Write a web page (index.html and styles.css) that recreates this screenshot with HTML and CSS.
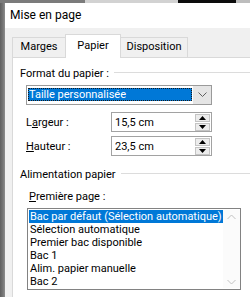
FILE: index.html
```html
<!DOCTYPE html>
<html lang="fr">
<head>
  <meta charset="UTF-8">
  <title>Mise en page</title>
  <link rel="stylesheet" href="styles.css">
</head>
<body>
  <div class="backdrop">
    <span class="seg seg-dark"></span>
    <span class="seg seg-light"></span>
    <span class="seg seg-black"></span>
    <span class="seg seg-mid"></span>
  </div>

  <div class="desk">
    <div class="edge"></div>

    <div class="window">
      <div class="titlebar">Mise en page</div>

      <div class="client">
        <div class="tabs">
          <div class="tab tab-marges">Marges</div>
          <div class="tab tab-papier active">Papier</div>
          <div class="tab tab-dispo">Disposition</div>
        </div>

        <div class="panel">
          <div class="group-title">Format du papier :</div>

          <div class="combo">
            <div class="combo-value"><span>Taille personnalisée</span></div>
            <div class="combo-arrow">
              <svg width="9" height="6" viewBox="0 0 9 6"><path d="M0.5 0.5 L4.5 4.5 L8.5 0.5" fill="none" stroke="#606060" stroke-width="1"/></svg>
            </div>
          </div>

          <div class="field field-first">
            <label class="field-label">L<u>a</u>rgeur :</label>
            <div class="spin">
              <span class="spin-value">15,5 cm</span>
              <div class="spin-buttons">
                <div class="spin-btn"><svg width="7" height="4" viewBox="0 0 7 4"><path d="M3.5 0 L7 4 L0 4 Z" fill="#000"/></svg></div>
                <div class="spin-btn"><svg width="7" height="4" viewBox="0 0 7 4"><path d="M0 0 L7 0 L3.5 4 Z" fill="#000"/></svg></div>
              </div>
            </div>
          </div>

          <div class="field">
            <label class="field-label"><u>H</u>auteur :</label>
            <div class="spin">
              <span class="spin-value">23,5 cm</span>
              <div class="spin-buttons">
                <div class="spin-btn"><svg width="7" height="4" viewBox="0 0 7 4"><path d="M3.5 0 L7 4 L0 4 Z" fill="#000"/></svg></div>
                <div class="spin-btn"><svg width="7" height="4" viewBox="0 0 7 4"><path d="M0 0 L7 0 L3.5 4 Z" fill="#000"/></svg></div>
              </div>
            </div>
          </div>

          <div class="group-title group-feed">Alimentation papier</div>

          <div class="sub-label"><u>P</u>remière page :</div>

          <div class="listbox">
            <ul class="items">
              <li class="item selected">Bac par défaut (Sélection automatique)</li>
              <li class="item">Sélection automatique</li>
              <li class="item">Premier bac disponible</li>
              <li class="item">Bac 1</li>
              <li class="item">Alim. papier manuelle</li>
              <li class="item">Bac 2</li>
            </ul>
            <div class="scrollbar">
              <svg width="9" height="6" viewBox="0 0 9 6"><path d="M0.5 5 L4.5 1 L8.5 5" fill="none" stroke="#c2c2c2" stroke-width="1"/></svg>
              <svg width="9" height="6" viewBox="0 0 9 6"><path d="M0.5 1 L4.5 5 L8.5 1" fill="none" stroke="#c2c2c2" stroke-width="1"/></svg>
            </div>
          </div>
        </div>
      </div>
    </div>
  </div>
</body>
</html>
```

FILE: styles.css
```css
html, body {
  margin: 0;
  width: 250px;
  height: 297px;
  overflow: hidden;
}

body {
  font-family: Roboto, 'Noto Sans', sans-serif;
  font-size: 11px;
  color: #000;
  background: #7a7a7a;
  display: flex;
  flex-direction: column;
}

/* bits of the desktop behind the dialog */
.backdrop {
  display: flex;
  height: 3px;
  flex-shrink: 0;
}

.seg {
  display: block;
  height: 100%;
}

.seg-dark { width: 85px; background: #7b7b7b; }
.seg-light { width: 93px; background: #d2d2d2; }
.seg-black { width: 58px; background: #0c0c0c; }
.seg-mid { flex: 1; background: #bdbdbd; }

.desk {
  flex: 1;
  display: flex;
  min-height: 0;
}

.edge {
  width: 5px;
  flex-shrink: 0;
  background: linear-gradient(to right, #5f5f5f, #767676 60%, #8e8e8e);
}

.window {
  flex: 1;
  display: flex;
  flex-direction: column;
  min-width: 0;
}

.titlebar {
  height: 25px;
  line-height: 25px;
  padding-left: 5px;
  background: #fff;
  font-size: 12px;
  flex-shrink: 0;
}

.client {
  flex: 1;
  display: flex;
  flex-direction: column;
  background: #f0f0f0;
  padding: 6px 0 0 7px;
  min-height: 0;
}

/* tabs */
.tabs {
  display: flex;
  align-items: flex-end;
  height: 23px;
  flex-shrink: 0;
}

.tab {
  box-sizing: border-box;
  height: 20px;
  line-height: 18px;
  text-align: center;
  border: 1px solid #d9d9d9;
  border-bottom: none;
  background: #f0f0f0;
}

.tab-marges { width: 53px; border-right: none; }
.tab-papier { width: 56px; }
.tab-dispo { width: 67px; border-left: none; }

.tab.active {
  height: 24px;
  line-height: 21px;
  background: #fff;
  margin-bottom: -1px;
  position: relative;
  z-index: 1;
}

/* tab page */
.panel {
  flex: 1;
  background: #fff;
  border-top: 1px solid #d9d9d9;
  border-left: 1px solid #d9d9d9;
  padding: 9px 0 0 7px;
}

.group-title {
  display: flex;
  align-items: center;
  height: 14px;
  line-height: 14px;
  white-space: nowrap;
}

.group-title::after {
  content: "";
  flex: 1;
  height: 1px;
  margin: -3px 0 0 5px;
  background: #dcdcdc;
}

.combo {
  display: flex;
  box-sizing: border-box;
  width: 186px;
  height: 20px;
  margin: 4px 0 0 6px;
  border: 1px solid #9a9a9a;
  background: #fff;
}

.combo-value {
  flex: 1;
  margin: 2px 1px 3px 1px;
  background: #0078d7;
  outline: 1px dotted #1a1a1a;
  outline-offset: -1px;
  color: #fff;
  line-height: 13px;
  padding-left: 1px;
}

.combo-arrow {
  width: 18px;
  background: #e5e5e5;
  display: flex;
  align-items: center;
  justify-content: center;
}

.field {
  display: flex;
  align-items: center;
  margin: 4px 0 0 6px;
}

.field-first {
  margin-top: 7px;
}

.field-label {
  width: 85px;
}

.spin {
  box-sizing: border-box;
  width: 101px;
  height: 20px;
  border: 1px solid #a2a2a2;
  display: flex;
  align-items: center;
  padding-left: 3px;
}

.spin-value {
  flex: 1;
}

.spin-buttons {
  display: flex;
  flex-direction: column;
  gap: 1px;
  margin-right: 1px;
}

.spin-btn {
  box-sizing: border-box;
  width: 15px;
  height: 8px;
  border: 1px solid #c4c4c4;
  background: #ececec;
  display: flex;
  align-items: center;
  justify-content: center;
}

.group-feed {
  margin-top: 12px;
}

.sub-label {
  height: 14px;
  line-height: 14px;
  margin: 8px 0 0 9px;
}

.listbox {
  box-sizing: border-box;
  width: 214px;
  margin: 4px 0 0 7px;
  border: 1px solid #828282;
  display: flex;
  padding: 1px 0 1px 1px;
}

.items {
  flex: 1;
  list-style: none;
  margin: 0;
  padding: 0;
}

.item {
  height: 13px;
  line-height: 13px;
  padding-left: 1px;
  white-space: nowrap;
}

.item.selected {
  background: #0078d7;
  color: #fff;
}

.scrollbar {
  width: 17px;
  display: flex;
  flex-direction: column;
  justify-content: space-between;
  align-items: center;
  padding: 4px 0 3px;
  background: #fbfbfb;
}
```
